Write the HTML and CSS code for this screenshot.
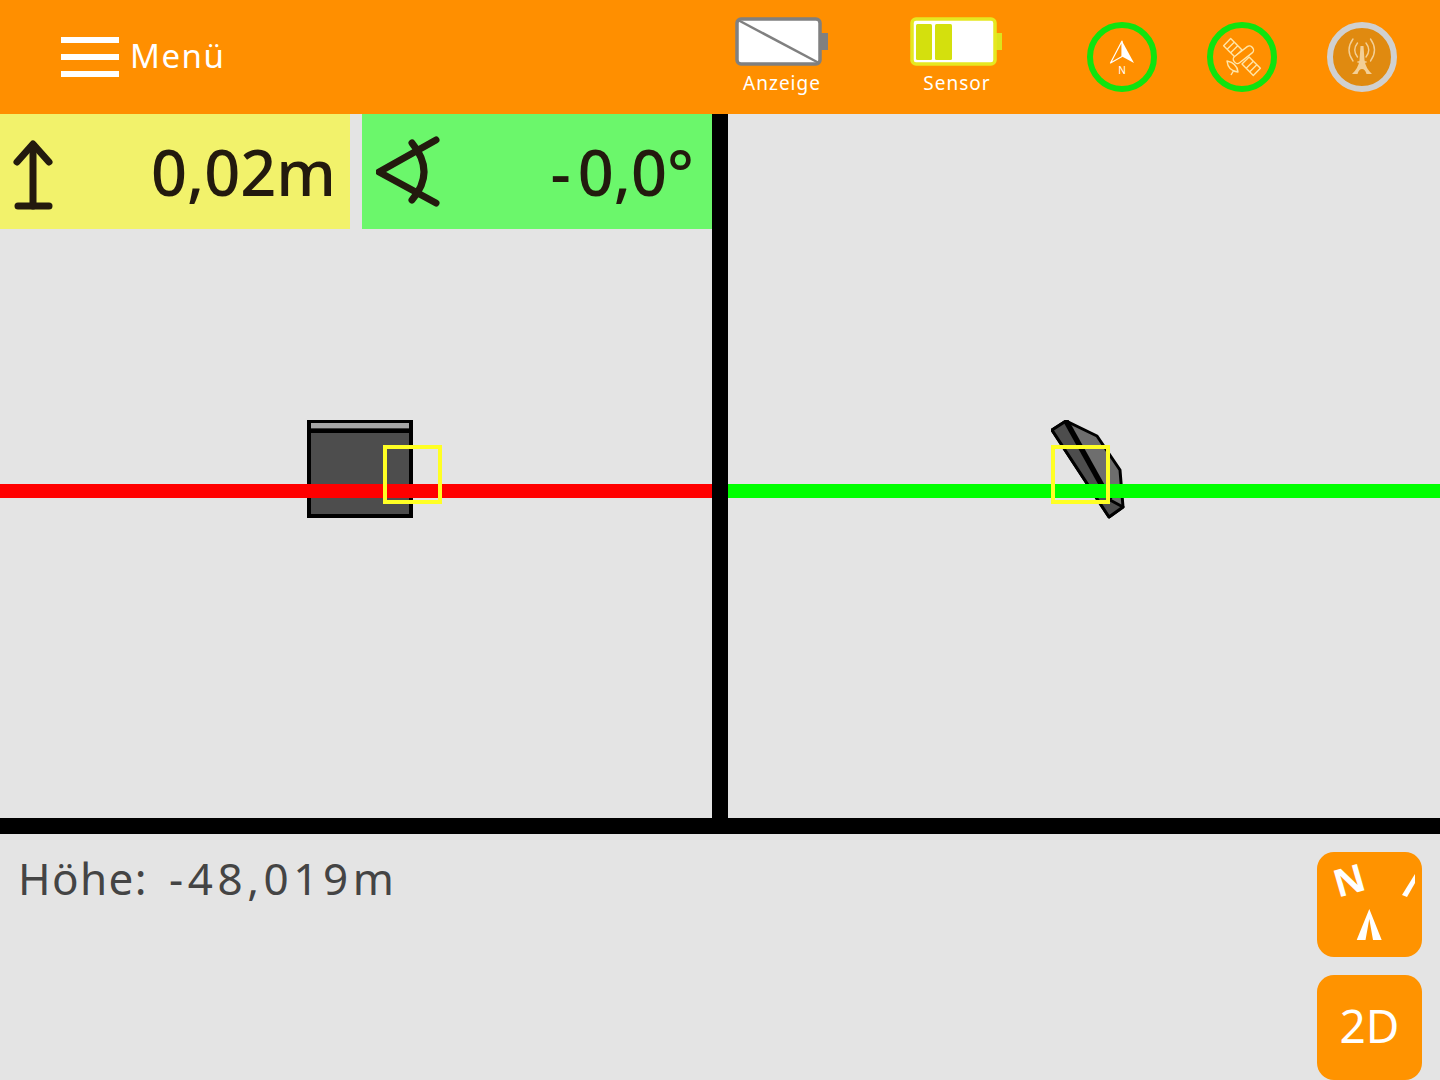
FILE: index.html
```html
<!DOCTYPE html>
<html lang="de">
<head>
  <meta charset="UTF-8">
  <title>Menü</title>
  <meta name="viewport" content="width=device-width, initial-scale=1.0">
  <link rel="stylesheet" href="styles.css">
</head>
<body>
  <!-- Kopfzeile -->
  <header class="topbar">
    <div class="menu">
      <div class="burger"><span></span><span></span><span></span></div>
      <span class="menu-label">Menü</span>
    </div>

    <div class="battery battery-display">
      <svg width="94" height="50" viewBox="0 0 94 50">
        <rect x="85" y="16" width="8" height="17" fill="#808080"/>
        <rect x="2" y="2" width="83" height="45" rx="4" fill="#fff" stroke="#808080" stroke-width="3.5"/>
        <line x1="3" y1="3" x2="84" y2="46" stroke="#808080" stroke-width="2.5"/>
      </svg>
      <span>Anzeige</span>
    </div>

    <div class="battery battery-sensor">
      <svg width="94" height="50" viewBox="0 0 94 50">
        <rect x="85" y="16" width="7" height="17" fill="#dce41c"/>
        <rect x="2" y="2" width="83" height="45" rx="4" fill="#fff" stroke="#e6e820" stroke-width="3.5"/>
        <rect x="6" y="7" width="16" height="36" rx="1.5" fill="#d4e00d"/>
        <rect x="25" y="7" width="17" height="36" rx="1.5" fill="#d4e00d"/>
      </svg>
      <span>Sensor</span>
    </div>

    <div class="status status-ok">
      <svg width="58" height="58" viewBox="0 0 58 58">
        <path d="M29 13 L17.5 35 L29 28.5 Z" fill="none" stroke="#fff" stroke-width="1.2" stroke-linejoin="round"/>
        <path d="M29 13 L41 35 L29 28.5 Z" fill="#fff"/>
        <text x="29" y="46" class="status-n">N</text>
      </svg>
    </div>

    <div class="status status-ok">
      <svg width="58" height="58" viewBox="0 0 58 58" fill="none" stroke="#ffe6a8" stroke-width="1.4" stroke-linejoin="round">
        <g transform="rotate(-45 29 29)">
          <rect x="24" y="8" width="10" height="16"/>
          <line x1="24" y1="13" x2="34" y2="13"/>
          <line x1="24" y1="18" x2="34" y2="18"/>
          <rect x="24" y="34" width="10" height="16"/>
          <line x1="24" y1="40" x2="34" y2="40"/>
          <line x1="24" y1="45" x2="34" y2="45"/>
        </g>
        <rect x="19" y="23" width="23" height="8" rx="3.5" fill="#ff8f00" transform="rotate(-38 30 27)"/>
        <path d="M14 33 Q15 43 25 44 Q24 35 14 33 Z"/>
        <path d="M18 47 L21 42"/>
      </svg>
    </div>

    <div class="status status-off">
      <svg width="58" height="58" viewBox="0 0 58 58" fill="none" stroke="#f3cf96" stroke-width="1.4" stroke-linecap="round">
        <path d="M24.5 15 Q19 22 24.5 29"/>
        <path d="M20 11 Q12 22 20 33"/>
        <path d="M33 15 Q38.5 22 33 29"/>
        <path d="M37.5 11 Q45.5 22 37.5 33"/>
        <path d="M27.5 18 H30.5 L31.5 32 Q32.5 40 39 46 H33.5 Q32 41 29 41 Q26 41 24.5 46 H19 Q25.5 40 26.5 32 Z" fill="#f3cf96" stroke="none"/>
        <line x1="25" y1="34" x2="33" y2="34" stroke="#f3cf96" stroke-width="1.6"/>
      </svg>
    </div>
  </header>

  <!-- Ansichten -->
  <main class="views">
    <section class="view view-front">
      <div class="readouts">
        <div class="readout readout-height">
          <svg class="readout-icon" width="44" height="76" viewBox="0 0 44 76" fill="none" stroke="#231a0e" stroke-width="7" stroke-linecap="round" stroke-linejoin="round">
            <path d="M5 28 L21 10 L37 28"/>
            <line x1="21" y1="11" x2="21" y2="72"/>
            <line x1="6" y1="72" x2="37" y2="72"/>
          </svg>
          <span>0,02m</span>
        </div>
      </div>
      <svg class="device device-front" width="140" height="100" viewBox="0 0 140 100">
        <rect x="2" y="2" width="102" height="94" fill="#4d4d4d" stroke="#000" stroke-width="4"/>
        <rect x="4" y="3" width="98" height="5.5" fill="#a6a6a6"/>
        <rect x="4" y="8.5" width="98" height="4.5" fill="#000"/>
      </svg>
      <div class="level level-red"></div>
      <div class="marker marker-front"></div>
    </section>

    <div class="divider-v"></div>

    <section class="view view-side">
      <svg class="device device-side" width="80" height="104" viewBox="0 0 80 104">
        <path d="M1 10 L15 1 L46 16 L69 50 L72 87 L58 97 Z" fill="#6e6e6e" stroke="#000" stroke-width="3" stroke-linejoin="round"/>
        <path d="M1 10 L15 1 L59 80 L72 87 L58 97 Z" fill="#4d4d4d" stroke="#000" stroke-width="3" stroke-linejoin="round"/>
        <line x1="15" y1="1" x2="59" y2="80" stroke="#000" stroke-width="5.5"/>
      </svg>
      <div class="level level-green"></div>
      <div class="marker marker-side"></div>
    </section>

    <div class="readout readout-angle">
      <svg class="readout-icon" width="70" height="76" viewBox="0 0 70 76" fill="none" stroke="#231a0e" stroke-width="7" stroke-linecap="round" stroke-linejoin="round">
        <path d="M60 6 L3 38 L60 69"/>
        <path d="M36 9 Q60 38 36 66"/>
      </svg>
      <span><span class="minus">-</span>0,0°</span>
    </div>
  </main>

  <div class="divider-h"></div>

  <!-- Untere Leiste -->
  <footer class="infobar">
    <p class="altitude">Höhe: <span class="altitude-value">-48,019m</span></p>
    <div class="actions">
      <button class="action">
        <svg width="105" height="105" viewBox="0 0 105 105">
          <text x="32" y="42" transform="rotate(-16 32 28)" class="compass-n">N</text>
          <path d="M98 22 V31 L90 45 L85 43 Z" fill="#fff"/>
          <path d="M52.3 57 L39.7 88 H48.5 L52.3 67 L56 88 H64.7 Z" fill="#fff"/>
        </svg>
      </button>
      <button class="action action-text">2D</button>
    </div>
  </footer>
</body>
</html>
```

FILE: styles.css
```css
* {
  box-sizing: border-box;
}

body {
  margin: 0;
  width: 1440px;
  height: 1080px;
  overflow: hidden;
  font-family: "Noto Sans", sans-serif;
  background-color: #e4e4e4;
  color: #231a0e;
}

/* Kopfzeile */
.topbar {
  height: 114px;
  background-color: #ff8f00;
  color: #fff;
  display: flex;
  align-items: flex-start;
}

.menu {
  display: flex;
  align-items: center;
  gap: 11px;
  flex: none;
  width: 735px;
  padding: 37px 0 0 61px;
}

.burger {
  display: flex;
  flex-direction: column;
  gap: 11px;
  width: 58px;
}

.burger span {
  height: 6px;
  background-color: #fff;
}

.menu-label {
  font-size: 33px;
  line-height: 38px;
  letter-spacing: 1.5px;
  margin-bottom: 2px;
}

.battery {
  flex: none;
  width: 94px;
  padding-top: 17px;
  display: flex;
  flex-direction: column;
}

.battery svg {
  display: block;
}

.battery span {
  font-size: 19px;
  line-height: 26px;
  letter-spacing: 1px;
  text-align: center;
  margin-top: 3px;
}

.battery-display {
  margin-right: 81px;
}

.battery-sensor {
  margin-right: 83px;
}

.status {
  flex: none;
  width: 70px;
  height: 70px;
  margin-top: 22px;
  border-radius: 50%;
  border: 6px solid #0fe40f;
  margin-right: 50px;
}

.status svg {
  display: block;
}

.status-off {
  border-color: #d0d0d0;
  background-color: #e08a10;
  margin-right: 0;
}

.status-n {
  font-size: 10px;
  fill: #fff;
  text-anchor: middle;
}

/* Ansichten */
.views {
  height: 704px;
  display: flex;
  position: relative;
}

.view {
  position: relative;
  flex: 1;
  overflow: hidden;
}

.divider-v {
  width: 16px;
  background-color: #000;
}

.divider-h {
  height: 16px;
  background-color: #000;
}

.readouts {
  display: flex;
}

.readout {
  width: 350px;
  height: 115px;
  display: flex;
  align-items: center;
  justify-content: space-between;
  font-size: 63px;
  font-weight: 500;
  line-height: 115px;
}

.readout-height {
  background-color: #f2f26b;
  padding: 0 14px 0 12px;
}

.readout-angle {
  position: absolute;
  top: 0;
  left: 362px;
  background-color: #6bf76b;
  padding: 0 18px 0 14px;
}

.minus {
  letter-spacing: 7px;
}

.readout-icon {
  display: block;
}

.device {
  position: absolute;
  display: block;
}

.device-front {
  left: 307px;
  top: 306px;
}

.device-side {
  left: 323px;
  top: 306px;
}

.level {
  position: absolute;
  top: 370px;
  left: 0;
  right: 0;
  height: 14px;
}

.level-red {
  background-color: #ff0000;
}

.level-green {
  background-color: #00ff00;
}

.marker {
  position: absolute;
  top: 331px;
  width: 59px;
  height: 59px;
  border: 4px solid #ffff24;
}

.marker-front {
  left: 383px;
}

.marker-side {
  left: 323px;
}

/* Untere Leiste */
.infobar {
  height: 246px;
  display: flex;
  justify-content: space-between;
  padding: 18px 18px 0 18px;
}

.altitude {
  margin: 0;
  font-size: 44px;
  line-height: 52px;
  letter-spacing: 1.4px;
  word-spacing: 8px;
  color: #444;
}

.altitude-value {
  letter-spacing: 4.6px;
}

.actions {
  display: flex;
  flex-direction: column;
  gap: 18px;
}

.action {
  width: 105px;
  height: 105px;
  padding: 0;
  border: 0;
  border-radius: 17px;
  background-color: #ff9300;
  color: #fff;
  font-family: "Noto Sans", sans-serif;
}

.action svg {
  display: block;
  overflow: visible;
}

.action-text {
  font-size: 46px;
  padding-bottom: 6px;
}

.compass-n {
  font-family: "Noto Sans", sans-serif;
  font-size: 38px;
  font-weight: 700;
  fill: #fff;
  text-anchor: middle;
}
```
